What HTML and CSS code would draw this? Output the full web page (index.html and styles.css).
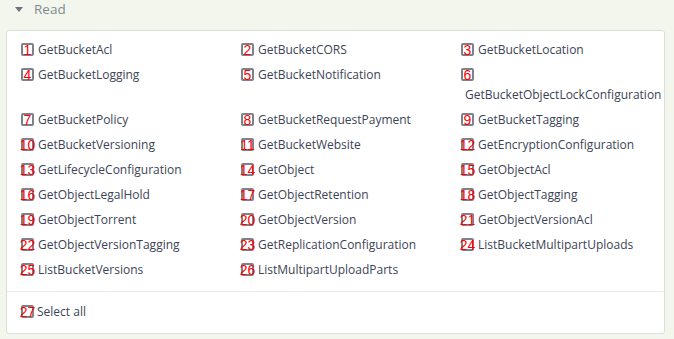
FILE: index.html
```html
<!DOCTYPE html>
<html>
<head>
<meta charset="utf-8">
<link rel="stylesheet" href="styles.css">
</head>
<body>
<div class="page">
  <div class="section-head">
    <span class="caret"></span>
    <span class="section-title">Read</span>
  </div>
  <div class="panel">
    <div class="grid">
      <label class="item"><span class="box"><span class="mark">1</span></span><span class="name">GetBucketAcl</span></label>
      <label class="item"><span class="box"><span class="mark">2</span></span><span class="name">GetBucketCORS</span></label>
      <label class="item"><span class="box"><span class="mark">3</span></span><span class="name">GetBucketLocation</span></label>
      <label class="item"><span class="box"><span class="mark">4</span></span><span class="name">GetBucketLogging</span></label>
      <label class="item"><span class="box"><span class="mark">5</span></span><span class="name">GetBucketNotification</span></label>
      <label class="item"><span class="box"><span class="mark">6</span></span> <span class="name">GetBucketObjectLockConfiguration</span></label>
      <label class="item"><span class="box"><span class="mark">7</span></span><span class="name">GetBucketPolicy</span></label>
      <label class="item"><span class="box"><span class="mark">8</span></span><span class="name">GetBucketRequestPayment</span></label>
      <label class="item"><span class="box"><span class="mark">9</span></span><span class="name">GetBucketTagging</span></label>
      <label class="item"><span class="box"><span class="mark">10</span></span><span class="name">GetBucketVersioning</span></label>
      <label class="item"><span class="box"><span class="mark">11</span></span><span class="name">GetBucketWebsite</span></label>
      <label class="item"><span class="box"><span class="mark">12</span></span><span class="name">GetEncryptionConfiguration</span></label>
      <label class="item"><span class="box"><span class="mark">13</span></span><span class="name">GetLifecycleConfiguration</span></label>
      <label class="item"><span class="box"><span class="mark">14</span></span><span class="name">GetObject</span></label>
      <label class="item"><span class="box"><span class="mark">15</span></span><span class="name">GetObjectAcl</span></label>
      <label class="item"><span class="box"><span class="mark">16</span></span><span class="name">GetObjectLegalHold</span></label>
      <label class="item"><span class="box"><span class="mark">17</span></span><span class="name">GetObjectRetention</span></label>
      <label class="item"><span class="box"><span class="mark">18</span></span><span class="name">GetObjectTagging</span></label>
      <label class="item"><span class="box"><span class="mark">19</span></span><span class="name">GetObjectTorrent</span></label>
      <label class="item"><span class="box"><span class="mark">20</span></span><span class="name">GetObjectVersion</span></label>
      <label class="item"><span class="box"><span class="mark">21</span></span><span class="name">GetObjectVersionAcl</span></label>
      <label class="item"><span class="box"><span class="mark">22</span></span><span class="name">GetObjectVersionTagging</span></label>
      <label class="item"><span class="box"><span class="mark">23</span></span><span class="name">GetReplicationConfiguration</span></label>
      <label class="item"><span class="box"><span class="mark">24</span></span><span class="name">ListBucketMultipartUploads</span></label>
      <label class="item"><span class="box"><span class="mark">25</span></span><span class="name">ListBucketVersions</span></label>
      <label class="item"><span class="box"><span class="mark">26</span></span><span class="name">ListMultipartUploadParts</span></label>
    </div>
    <div class="footer">
      <label class="item"><span class="box"><span class="mark">27</span></span><span class="name tight">Select all</span></label>
    </div>
  </div>
</div>
</body>
</html>
```
FILE: styles.css
```css
html, body {
  margin: 0;
  padding: 0;
  background: #f2f6ec;
}
.page {
  padding: 0 9px 0 6px;
  font-family: "Open Sans", sans-serif;
  font-size: 12px;
  color: #3c4456;
}
.section-head {
  height: 18px;
  display: flex;
  align-items: center;
  padding: 0 0 12px 9px;
}
.caret {
  width: 0;
  height: 0;
  border-left: 4px solid transparent;
  border-right: 4px solid transparent;
  border-top: 5px solid #6b7480;
  margin-right: 11px;
}
.section-title {
  font-size: 13.5px;
  color: #808a94;
}
.panel {
  background: #ffffff;
  border: 1px solid #dcdfd9;
  border-radius: 3px;
}
.grid {
  display: grid;
  grid-template-columns: 220px 220px minmax(0, 1fr);
  row-gap: 5px;
  padding: 9px 0 11px 14px;
}
.item {
  display: block;
  line-height: 20px;
  white-space: normal;
  min-width: 0;
}
.box {
  position: relative;
  display: inline-block;
  width: 9px;
  height: 9px;
  border: 2px solid #7d818c;
  border-radius: 2px;
  background: #fff;
  vertical-align: -2px;
}
.mark {
  position: absolute;
  left: 50%;
  top: 50%;
  transform: translate(-50%, -50%);
  font-family: "Liberation Sans", sans-serif;
  font-size: 14px;
  line-height: 14px;
  color: #ff0000;
  white-space: nowrap;
}
.name {
  padding-left: 4px;
}
.footer {
  border-top: 1px solid #e8eae6;
  padding: 10px 0 11px 14px;
}
.name.tight {
  padding-left: 3px;
}
```
